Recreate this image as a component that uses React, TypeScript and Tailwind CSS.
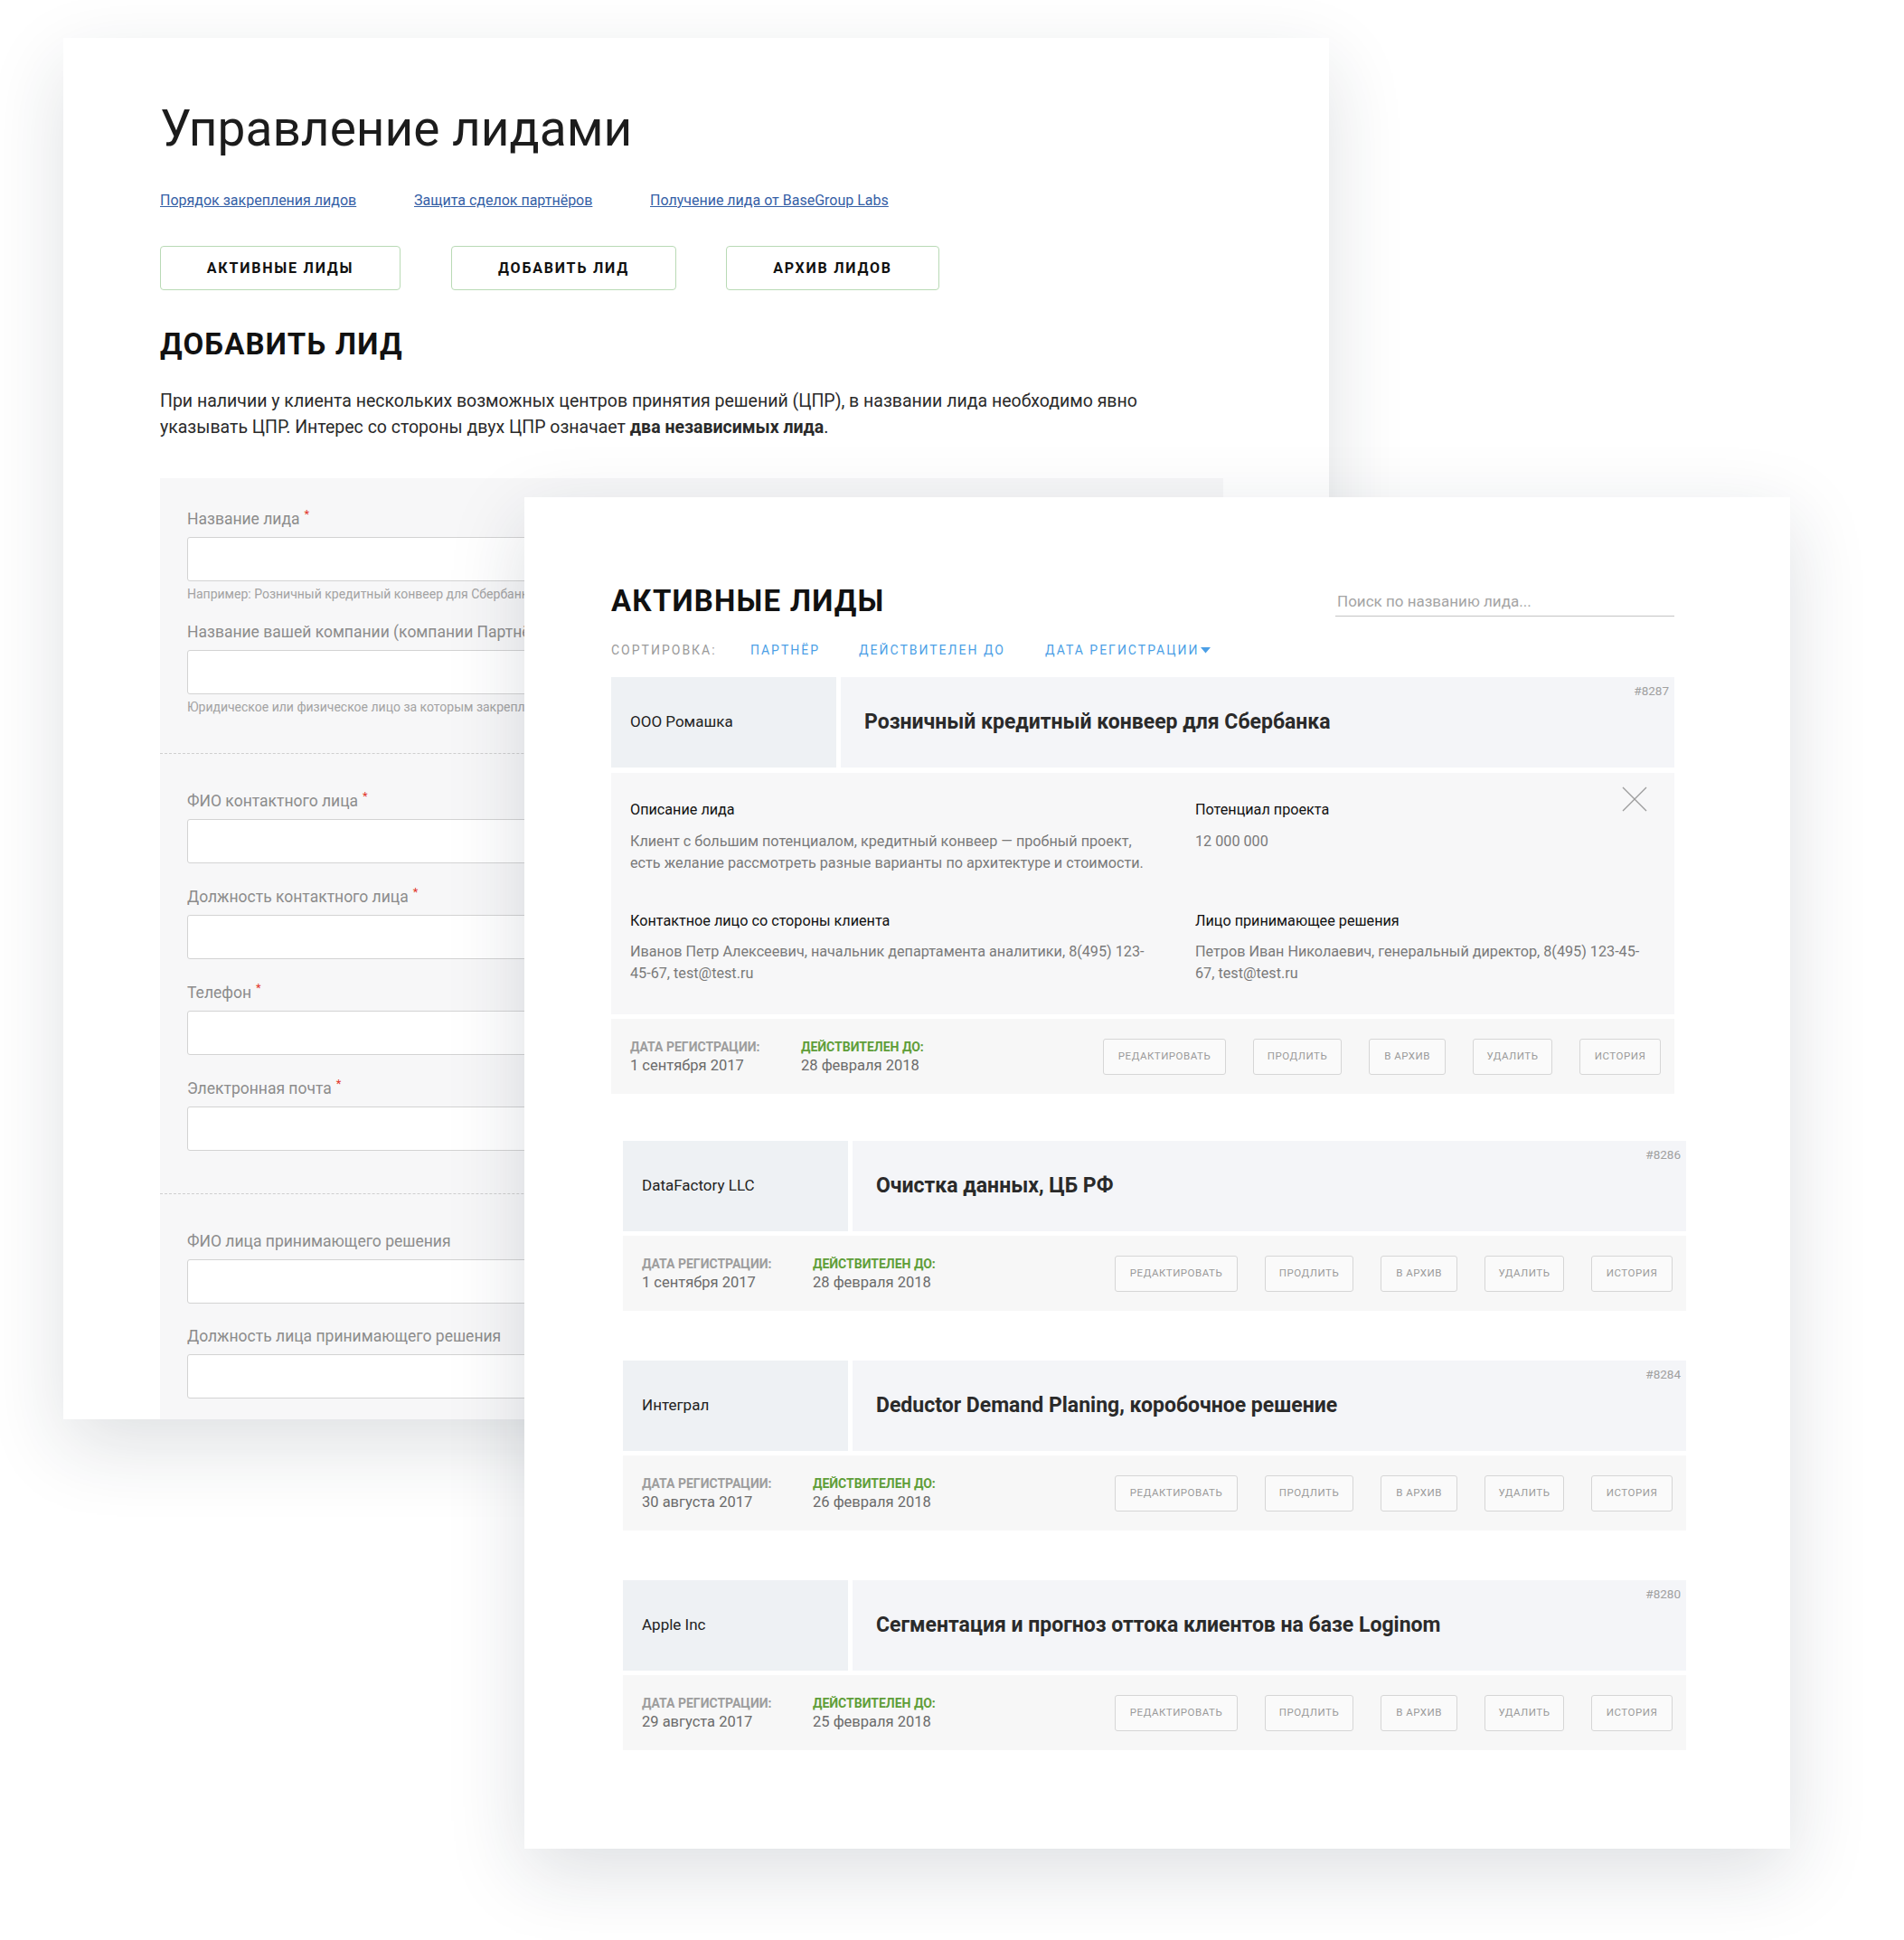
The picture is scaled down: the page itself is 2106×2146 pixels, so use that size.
import React from 'react';

interface Lead {
  id: string;
  company: string;
  title: string;
  registered: string;
  validUntil: string;
}

const leads: Lead[] = [
  { id: '#8287', company: 'ООО Ромашка', title: 'Розничный кредитный конвеер для Сбербанка', registered: '1 сентября 2017', validUntil: '28 февраля 2018' },
  { id: '#8286', company: 'DataFactory LLC', title: 'Очистка данных, ЦБ РФ', registered: '1 сентября 2017', validUntil: '28 февраля 2018' },
  { id: '#8284', company: 'Интеграл', title: 'Deductor Demand Planing, коробочное решение', registered: '30 августа 2017', validUntil: '26 февраля 2018' },
  { id: '#8280', company: 'Apple Inc', title: 'Сегментация и прогноз оттока клиентов на базе Loginom', registered: '29 августа 2017', validUntil: '25 февраля 2018' },
];

const actions = [
  { label: 'Редактировать', w: 'w-[136px]' },
  { label: 'Продлить', w: 'w-[98px]' },
  { label: 'В архив', w: 'w-[85px]' },
  { label: 'Удалить', w: 'w-[88px]' },
  { label: 'История', w: 'w-[90px]' },
];

const Field: React.FC<{ label: string; required?: boolean; hint?: string; className?: string }> = ({ label, required, hint, className }) => (
  <div className={className}>
    <div className="text-[17.5px] leading-[24px] text-[#8c8c8c]">
      {label}
      {required && <span className="ml-[5px] align-top text-[13px] leading-[14px] text-[#e2372c]">*</span>}
    </div>
    <div className="mt-2 h-[49px] w-[1116px] rounded-[3px] border border-[#d3d3d3] bg-white"></div>
    {hint && <div className="mt-1 text-[14px] leading-[20px] text-[#a3a3a3]">{hint}</div>}
  </div>
);

const LeadCard: React.FC<{ lead: Lead; expanded?: boolean; className?: string }> = ({ lead, expanded, className }) => (
  <div className={className}>
    <div className="flex h-[100px] gap-[5px]">
      <div className="flex w-[249px] shrink-0 items-center bg-[#eef1f4] pl-[21px] text-[17px] text-[#222]">
        {lead.company}
      </div>
      <div className="relative flex flex-1 items-center bg-[#f4f5f8] pl-[26px]">
        <span className="absolute right-[6px] top-[5px] text-[13.5px] text-[#a0a0a0]">{lead.id}</span>
        <span className="text-[23px] font-bold text-[#2a2a2a]">{lead.title}</span>
      </div>
    </div>

    {expanded && (
      <div className="relative mt-[6px] grid grid-cols-[625px_1fr] bg-[#f7f7f8] pb-[33px] pl-[21px] pr-[31px] pt-[29px]">
        <svg className="absolute right-[30px] top-[15px]" width="28" height="28" viewBox="0 0 28 28">
          <path d="M1 1L27 27M27 1L1 27" stroke="#9b9b9b" strokeWidth="1.3" fill="none" />
        </svg>
        <div>
          <div className="text-[16.2px] leading-[24px] text-[#111]">Описание лида</div>
          <div className="mt-[11px] text-[16.2px] leading-[24px] text-[#7a7a7a]">
            Клиент с большим потенциалом, кредитный конвеер — пробный проект,
            <br />
            есть желание рассмотреть разные варианты по архитектуре и стоимости.
          </div>
        </div>
        <div>
          <div className="text-[16.2px] leading-[24px] text-[#111]">Потенциал проекта</div>
          <div className="mt-[11px] text-[16.2px] leading-[24px] text-[#7a7a7a]">12 000 000</div>
        </div>
        <div className="mt-[40px]">
          <div className="text-[16.2px] leading-[24px] text-[#111]">Контактное лицо со стороны клиента</div>
          <div className="mt-[10px] text-[16.2px] leading-[24px] text-[#7a7a7a]">
            Иванов Петр Алексеевич, начальник департамента аналитики, 8(495) 123-
            <br />
            45-67, test@test.ru
          </div>
        </div>
        <div className="mt-[40px]">
          <div className="text-[16.2px] leading-[24px] text-[#111]">Лицо принимающее решения</div>
          <div className="mt-[10px] text-[16.2px] leading-[24px] text-[#7a7a7a]">
            Петров Иван Николаевич, генеральный директор, 8(495) 123-45-
            <br />
            67, test@test.ru
          </div>
        </div>
      </div>
    )}

    <div className="mt-[5px] flex h-[83px] items-center bg-[#f7f7f7] pl-[21px] pr-[15px]">
      <div className="w-[189px]">
        <div className="text-[14px] font-bold uppercase leading-[20px] text-[#9d9d9d]">Дата регистрации:</div>
        <div className="text-[16.5px] leading-[22px] text-[#6b6b6b]">{lead.registered}</div>
      </div>
      <div>
        <div className="text-[14px] font-bold uppercase leading-[20px] text-[#5f9e39]">Действителен до:</div>
        <div className="text-[16.5px] leading-[22px] text-[#6b6b6b]">{lead.validUntil}</div>
      </div>
      <div className="ml-auto flex gap-[30px]">
        {actions.map((a) => (
          <div
            key={a.label}
            className={`${a.w} flex h-[40px] items-center justify-center rounded-[3px] border border-[#d6d6d6] bg-[#fafafa] text-[11.5px] uppercase tracking-[0.5px] text-[#9a9a9a]`}
          >
            {a.label}
          </div>
        ))}
      </div>
    </div>
  </div>
);

export default function App() {
  return (
    <div className="relative h-[2146px] w-[2106px] overflow-hidden bg-white font-['Roboto',sans-serif]">
      {/* back window: add lead form */}
      <div className="absolute left-[70px] top-[42px] flex h-[1528px] w-[1400px] flex-col overflow-hidden bg-white pl-[107px] pt-[64px] shadow-[0_30px_80px_rgba(30,40,60,0.14)]">
        <h1 className="text-[55px] leading-[72px] text-[#1c1c1c]">Управление лидами</h1>

        <div className="mt-[32px] flex text-[16px] leading-[24px] text-[#3560a6]">
          <a className="w-[281px] underline">Порядок закрепления лидов</a>
          <a className="w-[261px] underline">Защита сделок партнёров</a>
          <a className="underline">Получение лида от BaseGroup Labs</a>
        </div>

        <div className="mt-[38px] flex">
          {[
            { t: 'Активные лиды', w: 'w-[266px] mr-[56px]' },
            { t: 'Добавить лид', w: 'w-[249px] mr-[55px]' },
            { t: 'Архив лидов', w: 'w-[236px]' },
          ].map((b) => (
            <div
              key={b.t}
              className={`${b.w} flex h-[49px] items-center justify-center rounded-[4px] border border-[#b9dab5] text-[16px] font-bold uppercase tracking-[1.8px] text-[#111]`}
            >
              {b.t}
            </div>
          ))}
        </div>

        <h2 className="mt-[40px] text-[33px] font-bold uppercase leading-[40px] tracking-[1.2px] text-[#111]">Добавить лид</h2>

        <p className="mt-[28px] text-[19.5px] leading-[29px] text-[#2a2a2a]">
          При наличии у клиента нескольких возможных центров принятия решений (ЦПР), в названии лида необходимо явно
          <br />
          указывать ЦПР. Интерес со стороны двух ЦПР означает <b className="font-bold">два независимых лида</b>.
        </p>

        <div className="mt-[42px] min-h-0 w-[1176px] flex-1 overflow-hidden bg-[#f7f7f8]">
          <div className="px-[30px] pt-[33px]">
            <Field label="Название лида" required hint="Например: Розничный кредитный конвеер для Сбербанка" />
            <Field className="mt-5" label="Название вашей компании (компании Партнёра)" hint="Юридическое или физическое лицо за которым закрепляется лид" />
          </div>
          <div className="mt-[41px] border-t border-dashed border-[#cfcfcf]"></div>
          <div className="px-[30px] pt-[40px]">
            <Field label="ФИО контактного лица" required />
            <Field className="mt-[25px]" label="Должность контактного лица" required />
            <Field className="mt-[25px]" label="Телефон" required />
            <Field className="mt-[25px]" label="Электронная почта" required />
          </div>
          <div className="mt-[47px] border-t border-dashed border-[#cfcfcf]"></div>
          <div className="px-[30px] pt-[40px]">
            <Field label="ФИО лица принимающего решения" />
            <Field className="mt-[24px]" label="Должность лица принимающего решения" />
          </div>
        </div>
      </div>

      {/* front window: active leads */}
      <div className="absolute left-[580px] top-[550px] h-[1495px] w-[1400px] bg-white pl-[96px] pr-[128px] pt-[95px] shadow-[0_25px_80px_rgba(30,40,60,0.15)]">
        <div className="flex items-end justify-between">
          <h2 className="text-[33px] font-bold uppercase leading-[40px] tracking-[1.2px] text-[#111]">Активные лиды</h2>
          <div className="mb-[3px] w-[375px] border-b border-[#c4c4c4] pb-1 pl-[2px] text-[17px] leading-[24px] text-[#a5a5a5]">
            Поиск по названию лида...
          </div>
        </div>

        <div className="mt-[24px] flex items-center text-[14px] uppercase leading-[20px] tracking-[2px]">
          <span className="w-[154px] text-[#9a9a9a]">Сортировка:</span>
          <span className="w-[120px] text-[#4c9fe6]">Партнёр</span>
          <span className="w-[206px] text-[#4c9fe6]">Действителен до</span>
          <span className="flex items-center text-[#4c9fe6]">
            Дата регистрации
            <svg className="ml-[2px]" width="11" height="7" viewBox="0 0 11 7">
              <path d="M0 0H11L5.5 6.5Z" fill="#4c9fe6" />
            </svg>
          </span>
        </div>

        <LeadCard className="mt-[20px]" lead={leads[0]} expanded />
        <LeadCard className="-mr-[13px] ml-[13px] mt-[52px]" lead={leads[1]} />
        <LeadCard className="-mr-[13px] ml-[13px] mt-[55px]" lead={leads[2]} />
        <LeadCard className="-mr-[13px] ml-[13px] mt-[55px]" lead={leads[3]} />
      </div>
    </div>
  );
}
